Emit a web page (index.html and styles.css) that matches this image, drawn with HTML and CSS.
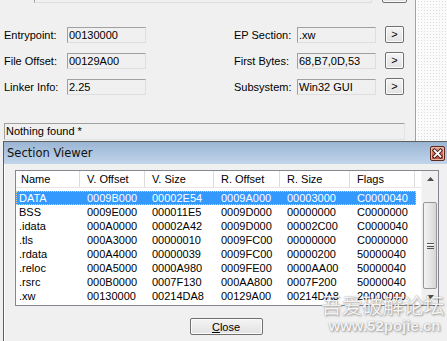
FILE: index.html
```html
<!DOCTYPE html>
<html lang="en">
  <head>
    <meta charset="UTF-8" />
    <title>Section Viewer</title>
    <link rel="stylesheet" href="styles.css">
  </head>
  <body>
    <div class="app">
      <div class="main">
        <div class="toprow">
          <div class="field path">Name  gyyjp  gqyy  jypq  gyjq yp</div>
          <button class="btn top"></button>
        </div>
        <div class="info">
          <div class="col">
            <div class="row"><span class="lbl">Entrypoint:</span><span class="field">00130000</span></div>
            <div class="row"><span class="lbl">File Offset:</span><span class="field">00129A00</span></div>
            <div class="row"><span class="lbl">Linker Info:</span><span class="field">2.25</span></div>
          </div>
          <div class="col right">
            <div class="row"><span class="lbl">EP Section:</span><span class="field">.xw</span><button class="btn">&gt;</button></div>
            <div class="row"><span class="lbl">First Bytes:</span><span class="field">68,B7,0D,53</span><button class="btn">&gt;</button></div>
            <div class="row"><span class="lbl">Subsystem:</span><span class="field">Win32 GUI</span><button class="btn">&gt;</button></div>
          </div>
        </div>
        <div class="status">Nothing found *</div>
      </div>
      <div class="side"></div>
    </div>

    <div class="dialog">
      <div class="titlebar">
        <span class="title">Section Viewer</span>
        <span class="xbtn">
          <svg width="13" height="13" viewBox="0 0 13 13">
            <path d="M3.5 3.5 L9.5 9.5 M9.5 3.5 L3.5 9.5" stroke="#3a1a14" stroke-width="3.6" stroke-linecap="square"/>
            <path d="M3.5 3.5 L9.5 9.5 M9.5 3.5 L3.5 9.5" stroke="#fff" stroke-width="1.8" stroke-linecap="square"/>
          </svg>
        </span>
      </div>
      <div class="dbody">
        <div class="list">
          <div class="table">
            <div class="head">
              <span class="c c1">Name</span>
              <span class="c">V. Offset</span>
              <span class="c c3">V. Size</span>
              <span class="c c4">R. Offset</span>
              <span class="c c5">R. Size</span>
              <span class="c">Flags</span>
            </div>
            <div class="rows">
              <div class="tr sel"><span class="c c1">DATA</span><span class="c">0009B000</span><span class="c c3">00002E54</span><span class="c c4">0009A000</span><span class="c c5">00003000</span><span class="c">C0000040</span></div>
              <div class="tr"><span class="c c1">BSS</span><span class="c">0009E000</span><span class="c c3">000011E5</span><span class="c c4">0009D000</span><span class="c c5">00000000</span><span class="c">C0000000</span></div>
              <div class="tr"><span class="c c1">.idata</span><span class="c">000A0000</span><span class="c c3">00002A42</span><span class="c c4">0009D000</span><span class="c c5">00002C00</span><span class="c">C0000040</span></div>
              <div class="tr"><span class="c c1">.tls</span><span class="c">000A3000</span><span class="c c3">00000010</span><span class="c c4">0009FC00</span><span class="c c5">00000000</span><span class="c">C0000000</span></div>
              <div class="tr"><span class="c c1">.rdata</span><span class="c">000A4000</span><span class="c c3">00000039</span><span class="c c4">0009FC00</span><span class="c c5">00000200</span><span class="c">50000040</span></div>
              <div class="tr"><span class="c c1">.reloc</span><span class="c">000A5000</span><span class="c c3">0000A980</span><span class="c c4">0009FE00</span><span class="c c5">0000AA00</span><span class="c">50000040</span></div>
              <div class="tr"><span class="c c1">.rsrc</span><span class="c">000B0000</span><span class="c c3">0007F130</span><span class="c c4">000AA800</span><span class="c c5">0007F200</span><span class="c">50000040</span></div>
              <div class="tr"><span class="c c1">.xw</span><span class="c">00130000</span><span class="c c3">00214DA8</span><span class="c c4">00129A00</span><span class="c c5">00214DA8</span><span class="c">20000000</span></div>
            </div>
          </div>
          <div class="vscroll">
            <div class="arrow up">
              <svg width="7" height="4" viewBox="0 0 7 4"><path d="M0 4 L3.5 0 L7 4 Z" fill="#4d4d4d"/></svg>
            </div>
            <div class="thumb"><span class="grip"></span></div>
            <div class="arrow down">
              <svg width="7" height="4" viewBox="0 0 7 4"><path d="M0 0 L7 0 L3.5 4 Z" fill="#4d4d4d"/></svg>
            </div>
          </div>
        </div>
        <div class="actions">
          <button class="btn close"><u>C</u>lose</button>
        </div>
      </div>
    </div>

    <div class="watermark">
      <div class="wm-cn">吾爱破解论坛</div>
      <div class="wm-url">www.52pojie.cn</div>
    </div>
  </body>
</html>
```

FILE: styles.css
```css
* {
  margin: 0px;
  padding: 0px;
  box-sizing: border-box;
}
body {
  width: 447px;
  height: 341px;
  overflow: hidden;
  background-color: #f0f0f0;
  font-family: "Liberation Sans", Arial, sans-serif;
  font-size: 11px;
  color: #000;
  position: relative;
}
.app {
  display: flex;
  height: 341px;
}
.main {
  width: 416px;
  border-right: 1px solid #a0a0a0;
}
.side {
  flex: 1;
  border-left: 1px solid #fff;
  background-color: #fbfbfb;
  background-image: radial-gradient(#dcdcdc 0.6px, transparent 0.8px);
  background-size: 3px 3px;
}
.field {
  display: block;
  height: 16px;
  line-height: 14px;
  padding-left: 1px;
  border: 1px solid;
  border-color: #a0a0a0 #dedede #dedede #a0a0a0;
  background-color: #f0f0f0;
  white-space: nowrap;
  overflow: hidden;
}
.btn {
  font-family: "Liberation Sans", Arial, sans-serif;
  font-size: 11px;
  color: #000;
  background: linear-gradient(#f4f4f4, #e2e2e2);
  border: 1px solid #707070;
  border-radius: 2px;
  box-shadow: inset 0 0 0 1px #fcfcfc;
}
.toprow {
  height: 3px;
  display: flex;
  align-items: flex-end;
  padding-left: 34px;
}
.field.path {
  width: 338px;
  flex-shrink: 0;
  line-height: 12px;
}
.btn.top {
  width: 25px;
  height: 17px;
  margin-left: 10px;
  flex-shrink: 0;
}
.info {
  display: flex;
  padding-top: 24px;
}
.col {
  width: 234px;
  padding-left: 4px;
  display: flex;
  flex-direction: column;
  gap: 10px;
}
.col.right {
  width: auto;
  padding-left: 0px;
}
.row {
  display: flex;
  align-items: center;
  height: 16px;
}
.lbl {
  width: 63px;
}
.row .field {
  width: 79px;
}
.row .btn {
  width: 19px;
  height: 17px;
  margin-left: 9px;
  margin-top: -1px;
  font-size: 11px;
  line-height: 13px;
}
.status {
  margin: 28px 0 0 4px;
  width: 401px;
  height: 17px;
  line-height: 15px;
  padding-left: 1px;
  border: 1px solid;
  border-color: #a0a0a0 #e3e3e3 #e3e3e3 #a0a0a0;
}

/* section viewer */
.dialog {
  position: absolute;
  left: 3px;
  top: 141px;
  width: 448px;
  height: 215px;
  border: 1px solid #5e5e5e;
  background-color: #f0f0f0;
  box-shadow: inset 1px 0 0 #fff;
}
.titlebar {
  height: 22px;
  display: flex;
  align-items: center;
  justify-content: space-between;
  padding: 0 5px 0 3px;
  background: linear-gradient(#9ab5d4, #b1c8e2 60%, #c2d5ea);
}
.title {
  font-family: "DejaVu Sans", Verdana, sans-serif;
  font-size: 11.5px;
  color: #111;
}
.xbtn {
  width: 15px;
  height: 15px;
  border: 1px solid #5b2820;
  border-radius: 2px;
  background: linear-gradient(#e8a898, #cf6a58 50%, #c24a36);
  box-shadow: inset 0 0 0 1px #eab7a9;
  display: flex;
  align-items: center;
  justify-content: center;
}
.dbody {
  padding: 6px 11px 0 11px;
}
.list {
  height: 136px;
  border: 1px solid #828790;
  background-color: #fff;
  display: flex;
}
.table {
  flex: 1;
}
.head {
  display: flex;
  height: 17px;
  line-height: 16px;
  border-bottom: 1px solid #e5e5e5;
}
.head .c {
  border-right: 1px solid #dcdcdc;
}
.head .c1 {
  padding-left: 5px;
}
.c {
  width: 65px;
  padding-left: 7px;
  white-space: nowrap;
  overflow: hidden;
}
.c1 {
  width: 64px;
}
.c3 {
  width: 69px;
}
.c4 {
  width: 66px;
}
.c5 {
  width: 70px;
}
.rows {
  padding-top: 3px;
}
.tr {
  display: flex;
  height: 14px;
  line-height: 14px;
  width: 400px;
}
.tr .c1 {
  padding-left: 3px;
}
.tr.sel {
  background-color: #3399ff;
  color: #fff;
  outline: 1px dotted #f5c98a;
  outline-offset: -1px;
}
.vscroll {
  width: 17px;
  background-color: #f0f0f0;
  border-left: 1px solid #f7f7f7;
  display: flex;
  flex-direction: column;
  align-items: center;
}
.arrow {
  height: 17px;
  width: 100%;
  display: flex;
  align-items: center;
  justify-content: center;
}
.thumb {
  margin-top: 15px;
  width: 14px;
  height: 89px;
  border: 1px solid #979797;
  border-radius: 2px;
  background: linear-gradient(90deg, #f3f3f3, #e6e6e6 50%, #d6d6d6);
  display: flex;
  align-items: center;
  justify-content: center;
}
.grip {
  width: 7px;
  height: 6px;
  border-top: 1px solid #555;
  border-bottom: 1px solid #555;
  background: linear-gradient(#fff 0 1px, transparent 1px 2px, #555 2px 3px, transparent 3px);
}
.arrow.down {
  margin-top: auto;
}
.actions {
  display: flex;
  justify-content: center;
  padding-top: 12px;
  padding-right: 2px;
}
.btn.close {
  width: 73px;
  height: 17px;
  line-height: 14px;
}

.watermark {
  position: absolute;
  left: 321px;
  top: 292px;
  color: rgba(255, 255, 255, 0.92);
  text-shadow: 0 0 1px rgba(60, 60, 60, 0.55), 1px 1px 2px rgba(0, 0, 0, 0.3);
  text-align: center;
}
.wm-cn {
  font-family: "Noto Sans CJK SC", sans-serif;
  font-size: 21px;
  line-height: 24px;
  letter-spacing: -0.5px;
}
.wm-url {
  font-family: "Liberation Sans", Arial, sans-serif;
  font-size: 15px;
  font-weight: bold;
  line-height: 18px;
  margin-top: 1px;
  padding-left: 4px;
}
```
